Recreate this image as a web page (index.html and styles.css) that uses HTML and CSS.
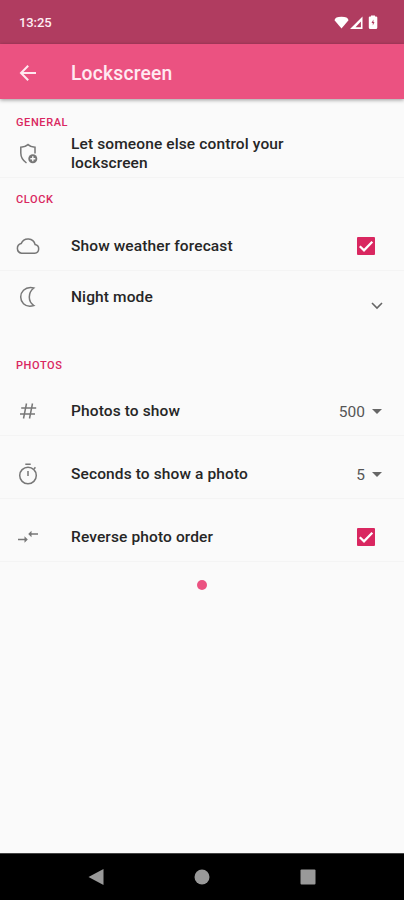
FILE: index.html
```html
<!DOCTYPE html>
<html lang="en">
<head>
<meta charset="utf-8">
<title>Lockscreen</title>
<link rel="stylesheet" href="styles.css">
</head>
<body>
<div class="statusbar">
  <span class="time">13:25</span>
  <svg class="status-icons" width="46" height="16" viewBox="0 0 46 16" fill="#fff">
    <path d="M0.500 5.200Q1 1.800 7.500 1.800T14.500 5.200L7.500 13.500Z"/>
    <path d="M28.500 1.500V14H16ZM26.900 6.500L21.500 12.300H26.900Z" fill-rule="evenodd"/>
    <path d="M37 1.500V.5h4v1h1q1.300 0 1.300 1V12.500q0 1.500-1.500 1.500h-5.500Q34.800 14 34.800 12.500V2.500q0-1 1.200-1Z"/>
    <path d="M39.400 4.500L37.500 8h1.300v2.500L40.500 7h-1.100Z" fill="#b03c60"/>
  </svg>
</div>
<header class="appbar">
  <svg class="back" width="24" height="24" viewBox="0 0 24 24" fill="none" stroke="#ffe9f0" stroke-width="2"><path d="M20 12H5.500M12.200 4.700L5 12l7.200 7.300"/></svg>
  <h1>Lockscreen</h1>
</header>
<main>
  <section class="general">
    <h2>GENERAL</h2>
    <div class="row">
      <svg class="icon" viewBox="0 0 24 24"><path d="M10.500 21Q4.800 17 4.800 11V5.300Q9.300 5 12 2.600Q14.500 5 19 5.300V11.500"/><circle cx="16.800" cy="16.800" r="4.500" fill="#777" stroke="none"/><path d="M16.800 14.300v5M14.300 16.800h5" stroke="#fafafa" stroke-width="1.400"/></svg>
      <span class="label">Let someone else control your lockscreen</span>
    </div>
  </section>
  <section class="clock">
    <h2>CLOCK</h2>
    <div class="row">
      <svg class="icon" viewBox="0 0 24 24"><path d="M5.500 19.200h13.200a4.400 4.400 0 0 0 .4-8.700 7.300 7.300 0 0 0-13.800-1.100A5 5 0 0 0 5.500 19.200Z"/></svg>
      <span class="label">Show weather forecast</span>
      <svg class="check" viewBox="0 0 18 18"><rect width="18" height="18" rx="1" fill="#d92760"/><path d="M2.800 9.200L7 13.300L15.300 4.800" fill="none" stroke="#fff" stroke-width="2.300"/></svg>
    </div>
    <div class="row night">
      <svg class="icon" viewBox="0 0 24 24"><path d="M17.800 3Q11.500 1.500 7.500 5.300A9.400 9.400 0 0 0 7.500 18.700Q11.500 22.500 17.800 20.500Q13.300 17.500 13.300 12T17.800 3Z"/></svg>
      <span class="label">Night mode</span>
      <svg class="chevron" viewBox="0 0 12 8"><path d="M1 1l5 5 5-5" fill="none" stroke="#666" stroke-width="1.600"/></svg>
    </div>
  </section>
  <section class="photos">
    <h2>PHOTOS</h2>
    <div class="row">
      <svg class="icon" viewBox="0 0 24 24"><path d="M10.500 4.500L7.500 19.500M16.500 4.500l-3 15M5.200 9h15M4 15h15"/></svg>
      <span class="label">Photos to show</span>
      <span class="value">500</span><span class="caret"></span>
    </div>
    <div class="row">
      <svg class="icon" viewBox="0 0 24 24"><circle cx="12" cy="13.500" r="8.300"/><path d="M9.300 2.300h5.400M12 9v5M18 6.800l1.500-1.400"/></svg>
      <span class="label">Seconds to show a photo</span>
      <span class="value">5</span><span class="caret"></span>
    </div>
    <div class="row">
      <svg class="icon" viewBox="0 0 24 24"><path d="M2 14.500h8M14 9h8"/><path d="M8.500 11.300l3.300 3.200-3.300 3.200ZM15.500 5.800L12.200 9l3.300 3.200Z" fill="#777" stroke="none"/></svg>
      <span class="label">Reverse photo order</span>
      <svg class="check" viewBox="0 0 18 18"><rect width="18" height="18" rx="1" fill="#d92760"/><path d="M2.800 9.200L7 13.300L15.300 4.800" fill="none" stroke="#fff" stroke-width="2.300"/></svg>
    </div>
  </section>
  <div class="dot"></div>
</main>
<nav class="navbar">
  <svg width="16" height="16" viewBox="0 0 16 16"><path d="M15.500 0V16L0.500 8Z"/></svg>
  <svg width="16" height="16" viewBox="0 0 16 16"><circle cx="8" cy="8" r="7.500"/></svg>
  <svg width="16" height="16" viewBox="0 0 16 16"><rect x=".5" y=".5" width="15" height="15" rx="1"/></svg>
</nav>
</body>
</html>
```
FILE: styles.css
```css
* { box-sizing: border-box; }
body {
  margin: 0;
  height: 900px;
  display: flex;
  flex-direction: column;
  overflow: hidden;
  background: #fafafa;
  color: #262626;
  font-family: Roboto, "Liberation Sans", sans-serif;
}
svg { display: block; flex: none; }
.statusbar {
  height: 44px;
  flex: none;
  display: flex;
  align-items: center;
  justify-content: space-between;
  padding: 1px 24px 0 19px;
  background: #b03c60;
}
.time { color: #ffeef3; font-size: 13px; font-weight: 500; letter-spacing: -.1px; }
.appbar {
  height: 55px;
  flex: none;
  display: flex;
  align-items: center;
  padding: 2px 16px 0;
  background: #eb5281;
  box-shadow: 0 1px 4px rgba(0, 0, 0, .4);
}
.appbar h1 {
  margin: 0 0 0 31px;
  padding-top: 1px;
  color: #ffeaf1;
  font-size: 19.3px;
  font-weight: 500;
  letter-spacing: .2px;
}
main { flex: 1; }
h2 {
  margin: 0;
  padding-left: 16px;
  color: #d92760;
  font-size: 11px;
  line-height: 14px;
  font-weight: 500;
  letter-spacing: .6px;
}
.row {
  display: flex;
  align-items: center;
  border-bottom: 1px solid #f4f4f4;
  padding-left: 16px;
}
.icon { width: 24px; height: 24px; fill: none; stroke: #777; stroke-width: 1.5; }
.label {
  flex: 1;
  margin-left: 31px;
  font-size: 15.5px;
  line-height: 18.5px;
  font-weight: 500;
  letter-spacing: .12px;
}
.general { padding-top: 17px; }
.general .row { height: 48px; padding-right: 90px; }
.clock { padding-top: 15px; }
.clock .row { height: 64px; padding-top: 15px; }
.clock .night { height: 88px; padding-top: 14px; align-items: flex-start; border: 0; }
.night .label { padding-top: 3px; }
.check { width: 18px; height: 18px; margin-right: 29px; }
.chevron { width: 12px; height: 8px; margin: 17px 21px 0 0; }
.photos .row { height: 63px; padding-top: 15px; }
.photos .icon, .photos .check, .photos .caret { margin-bottom: 1px; }
.value { color: #555; font-size: 15.5px; }
.photos .caret {
  margin: 0 22px 1px 7px;
  border-top: 5px solid #666;
  border-left: 5px solid transparent;
  border-right: 5px solid transparent;
}
.dot { width: 10px; height: 10px; margin: 18px auto; border-radius: 50%; background: #eb5281; }
.navbar {
  height: 47px;
  flex: none;
  display: flex;
  align-items: center;
  justify-content: space-between;
  padding: 0 88px;
  background: #000;
  border-top: 1px solid #444;
}
.navbar svg { fill: #999; }
```
